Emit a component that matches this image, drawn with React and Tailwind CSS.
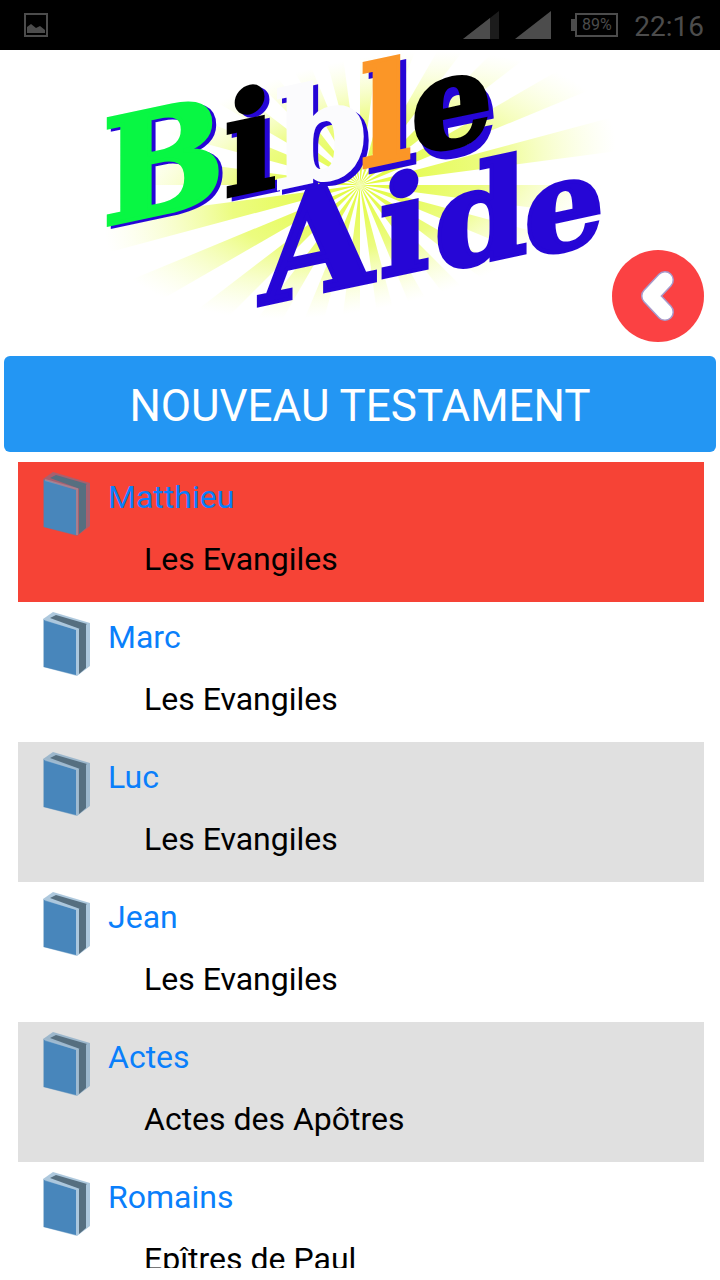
const BOOKS = [
  { name: 'Matthieu', group: 'Les Evangiles' },
  { name: 'Marc', group: 'Les Evangiles' },
  { name: 'Luc', group: 'Les Evangiles' },
  { name: 'Jean', group: 'Les Evangiles' },
  { name: 'Actes', group: 'Actes des Apôtres' },
  { name: 'Romains', group: 'Epîtres de Paul' },
];

const BLUE = '#2606d6';

const TOP_WORD = [
  { char: 'B', x: 12, y: 176, size: 145, fill: '#08f743', dx: 4, dy: 2 },
  { char: 'i', x: 134, y: 147, size: 138, fill: '#000000', dx: 5, dy: 3 },
  { char: 'b', x: 186, y: 139, size: 130, fill: '#fbfbfd', dx: 5, dy: 4 },
  { char: 'l', x: 270, y: 118, size: 136, fill: '#fb9627', dx: 6, dy: 5 },
  { char: 'e', x: 321, y: 105, size: 128, fill: '#000000', dx: 5, dy: 8 },
];

const BOTTOM_WORD = [
  { char: 'A', x: 170, y: 255, size: 146 },
  { char: 'i', x: 289, y: 228, size: 134 },
  { char: 'd', x: 344, y: 222, size: 134 },
  { char: 'e', x: 434, y: 208, size: 126 },
];

const RAY_COUNT = 24;

function rayPoints(i) {
  const step = (Math.PI * 2) / RAY_COUNT;
  const a = i * step;
  const b = a + step / 2;
  const point = (t) => `${270 + Math.cos(t) * 400},${135 + Math.sin(t) * 400}`;
  return `270,135 ${point(a)} ${point(b)}`;
}

function Letter({ char, x, y, size, fill }) {
  return (
    <text
      transform={`translate(${x} ${y}) skewY(-12)`}
      fontSize={size}
      fill={fill}
      stroke={fill}
      strokeWidth="4">
      {char}
    </text>
  );
}

function Logo() {
  return (
    <svg
      viewBox="0 0 540 270"
      className="w-[540px] max-w-full overflow-visible font-['DejaVu_Serif',serif] font-bold"
      role="img"
      aria-label="Bible Aide">
      <defs>
        <radialGradient
          id="rays"
          gradientUnits="userSpaceOnUse"
          cx="0"
          cy="0"
          r="1"
          gradientTransform="translate(270 135) rotate(-12) scale(260 125)">
          <stop offset="0" stopColor="#e2fb3c" />
          <stop offset="0.5" stopColor="#ecfc80" />
          <stop offset="1" stopColor="#f8ffc8" stopOpacity="0" />
        </radialGradient>
      </defs>
      {Array.from({ length: RAY_COUNT }, (_, i) => (
        <polygon key={i} points={rayPoints(i)} fill="url(#rays)" />
      ))}
      {TOP_WORD.map((l) => (
        <g key={l.char}>
          <Letter {...l} x={l.x + l.dx} y={l.y + l.dy} fill={BLUE} />
          <Letter {...l} />
        </g>
      ))}
      {BOTTOM_WORD.map((l) => (
        <Letter key={l.char} {...l} fill={BLUE} />
      ))}
    </svg>
  );
}

function StatusBar() {
  return (
    <div className="h-[50px] shrink-0 bg-black px-4 flex items-center text-[#4c4c4c]">
      <svg viewBox="0 0 24 24" className="ml-2 size-6" fill="currentColor">
        <path d="M0 0h24v24H0zM2 2v20h20V2z" fillRule="evenodd" />
        <path d="M3 20v-6l4-3 5 4 4-2 5 4v3z" />
      </svg>
      <div className="flex-1" />
      <svg viewBox="0 0 36 28" className="h-7 w-9" fill="currentColor">
        <path d="M0 28 36 0v28z" fill="#1c1c1c" />
        <path d="M0 28 27 7v21z" />
      </svg>
      <svg viewBox="0 0 36 28" className="ml-4 h-7 w-9" fill="currentColor">
        <path d="M0 28 36 0v28z" />
      </svg>
      <div className="ml-5 flex items-center">
        <div className="h-3 w-1 bg-[#4c4c4c]" />
        <div className="h-6 w-[43px] border-2 border-[#4c4c4c] flex items-center justify-center text-base">
          89%
        </div>
      </div>
      <div className="ml-4 pt-1 text-[28px]">22:16</div>
    </div>
  );
}

function BackButton() {
  return (
    <button
      aria-label="Retour"
      className="absolute right-4 bottom-[14px] size-[92px] rounded-full bg-[#fb4143]">
      <svg
        viewBox="0 0 92 92"
        fill="none"
        strokeLinecap="round"
        strokeLinejoin="round">
        <path d="M53 30 38 46l15 16" stroke="#a79acb" strokeWidth="18" />
        <path d="M53 30 38 46l15 16" stroke="#ffffff" strokeWidth="15" />
      </svg>
    </button>
  );
}

function BookIcon() {
  return (
    <svg viewBox="0 0 48 64" className="h-16 w-12 shrink-0">
      <path d="M1 7 11 0l37 11v43L35 64 1 55z" fill="#4a86b4" fillOpacity="0.45" />
      <path d="M8 6 14 3l31 9-7 5z" fill="#566f80" />
      <path d="M37 17l7-5v44l-7 6z" fill="#566f80" />
      <path d="M2 8l32 10v45L2 55z" fill="#4886bb" />
      <path d="M3 8l32 9v46" fill="none" stroke="#a9c8de" strokeOpacity="0.3" strokeWidth="2" />
    </svg>
  );
}

function BookRow({ book, index, selected }) {
  let color = index % 2 === 0 ? 'bg-[#e0e0e0]' : 'bg-white';
  if (selected) color = 'bg-[#f64336]';

  return (
    <li>
      <button className={`${color} w-full h-[140px] pl-6 pt-[10px] flex items-start text-left text-[32px]`}>
        <BookIcon />
        <span className="ml-[18px] flex flex-col">
          <span className="leading-[50px] text-[#0a7ffb]">{book.name}</span>
          <span className="mt-3 ml-9 leading-[50px] text-black">{book.group}</span>
        </span>
      </button>
    </li>
  );
}

export default function App() {
  return (
    <div className="h-screen flex flex-col bg-white pb-3 font-['Roboto',sans-serif]">
      <StatusBar />
      <header className="relative h-[306px] shrink-0 flex justify-center items-start">
        <Logo />
        <BackButton />
      </header>
      <button className="mx-1 h-24 shrink-0 rounded-md bg-[#2396f3] pt-1 text-[44px] text-white uppercase">
        Nouveau Testament
      </button>
      <ul className="mt-[10px] ml-[18px] mr-4 min-h-0 flex-1 overflow-hidden">
        {BOOKS.map((book, i) => (
          <BookRow key={book.name} book={book} index={i} selected={i === 0} />
        ))}
      </ul>
    </div>
  );
}
